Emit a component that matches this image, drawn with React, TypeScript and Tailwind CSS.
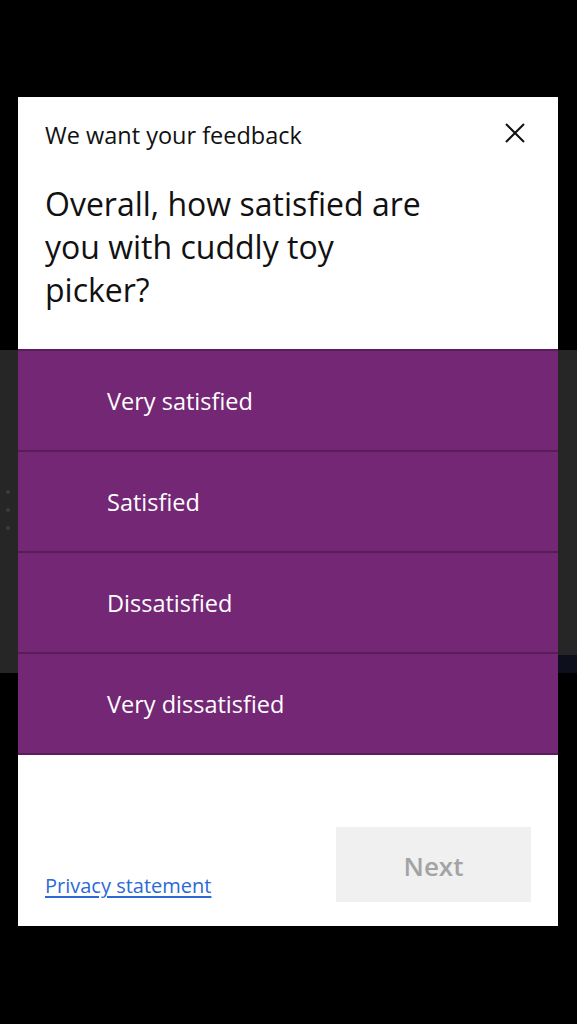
const options = ["Very satisfied", "Satisfied", "Dissatisfied", "Very dissatisfied"];

const font = { fontFamily: '"Open Sans", "Noto Sans", sans-serif' };

function CloseIcon() {
  return (
    <svg width="20" height="20" viewBox="0 0 20 20" fill="none" stroke="currentColor" strokeWidth="2">
      <path d="M1 1 L19 19 M19 1 L1 19" />
    </svg>
  );
}

export default function App() {
  return (
    <div className="relative min-h-[1024px] w-full bg-black overflow-hidden" style={font}>
      {/* app behind the dialog */}
      <div className="pt-[350px]">
        <div className="relative h-[323px] bg-[#262626]">
          <div className="absolute left-[6px] top-[140px] flex flex-col gap-[14px]">
            <span className="block w-[4px] h-[4px] rounded-full bg-[#3c3c3c]" />
            <span className="block w-[4px] h-[4px] rounded-full bg-[#3c3c3c]" />
            <span className="block w-[4px] h-[4px] rounded-full bg-[#3c3c3c]" />
          </div>
          <div className="absolute right-0 bottom-0 w-[30px] h-[18px] bg-[#0e0f1c]" />
        </div>
      </div>

      {/* feedback dialog */}
      <div className="absolute left-[18px] top-[97px] w-[540px] h-[829px] bg-white flex flex-col">
        <div className="flex items-start justify-between pl-[27px] pr-[33px] pt-[22px]">
          <p className="text-[23.5px] leading-[32px] text-[#111]">We want your feedback</p>
          <button className="mt-[4px] text-[#111]" aria-label="Close">
            <CloseIcon />
          </button>
        </div>

        <h1 className="pl-[27px] mt-[31px] w-[420px] text-[32px] leading-[43px] text-[#111]">
          Overall, how satisfied are you with cuddly toy picker?
        </h1>

        <div className="mt-[38px] flex flex-col border-t-2 border-[#5a1c5a]">
          {options.map((o) => (
            <button
              key={o}
              className="h-[101px] flex items-center pl-[89px] pt-[3px] bg-[#742774] border-b-2 border-[#5a1c5a] text-left text-[23.5px] text-white"
            >
              {o}
            </button>
          ))}
        </div>

        <div className="flex-1 flex items-end justify-between pl-[27px] pr-[27px] pb-[24px]">
          <a href="#" className="mb-[3px] text-[20px] leading-[26px] text-[#2b6ad6] underline underline-offset-[3px]">
            Privacy statement
          </a>
          <button className="w-[195px] h-[75px] pt-[3px] bg-[#f0f0f0] text-[26px] font-semibold text-[#a3a3a3]">
            Next
          </button>
        </div>
      </div>
    </div>
  );
}
